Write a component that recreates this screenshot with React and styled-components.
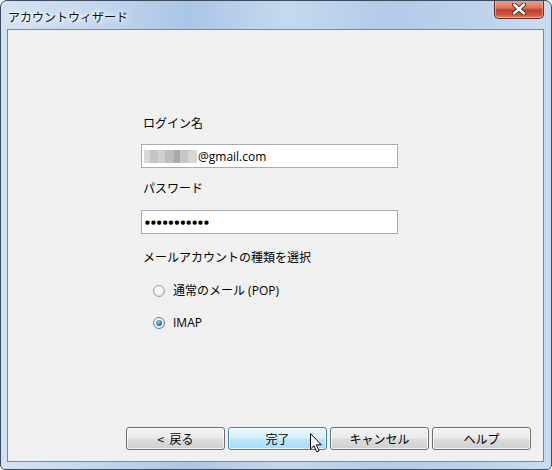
import React from "react";
import styled, { createGlobalStyle } from "styled-components";

const GlobalStyle = createGlobalStyle`
  html, body {
    margin: 0;
    padding: 0;
    background: #ffffff;
  }
  body {
    font-family: "Open Sans", "Noto Sans CJK JP", sans-serif;
    font-size: 12px;
    color: #000;
  }
`;

const Window = styled.div`
  position: relative;
  box-sizing: border-box;
  width: 552px;
  height: 470px;
  border: 1px solid #3d4b5c;
  border-radius: 7px 7px 5px 5px;
  background: linear-gradient(
    90deg,
    #d4e3f3 0%,
    #c2d6ee 18%,
    #aac6e6 34%,
    #c4d9ef 52%,
    #b2cbe8 70%,
    #bcd2ec 86%,
    #c9dcf1 100%
  );
  display: flex;
  flex-direction: column;
  overflow: hidden;
`;

const TitleBar = styled.div`
  height: 28px;
  display: flex;
  align-items: flex-start;
  justify-content: space-between;
  padding-left: 7px;
  padding-right: 6px;
`;

const Title = styled.span`
  margin-top: 8px;
  font-family: "Noto Sans CJK JP", sans-serif;
  font-size: 12px;
  line-height: 16px;
  color: #111;
  text-shadow: 0 0 8px #ffffff, 0 0 6px #ffffff, 0 0 4px #ffffff;
`;

const CloseButton = styled.div`
  width: 50px;
  height: 19px;
  margin-top: -1px;
  margin-right: 1px;
  box-sizing: border-box;
  border: 1px solid #6b2a22;
  border-top: none;
  border-radius: 0 0 5px 5px;
  background: linear-gradient(
    180deg,
    #e9a493 0%,
    #d8735f 45%,
    #c0412b 55%,
    #cf5a3f 85%,
    #e08a6c 100%
  );
  box-shadow: inset 0 0 0 1px rgba(255, 210, 195, 0.5);
  display: flex;
  align-items: center;
  justify-content: center;
`;

const Client = styled.div`
  flex: 1;
  margin: 0 7px 7px 6px;
  box-sizing: border-box;
  border: 1px solid #7d8894;
  background: #f0f0f0;
  display: flex;
  flex-direction: column;
`;

const Form = styled.div`
  width: 257px;
  margin: 85px 0 0 133px;
  display: flex;
  flex-direction: column;
`;

const Label = styled.div`
  font-family: "Noto Sans CJK JP", sans-serif;
  font-size: 12px;
  line-height: 16px;
  margin-left: 2px;
  margin-top: ${(p) => p.$gap || 0}px;
`;

const TextBox = styled.div`
  box-sizing: border-box;
  height: 24px;
  margin-top: ${(p) => p.$gap || 0}px;
  border: 1px solid #a9abaf;
  background: #ffffff;
  display: flex;
  align-items: center;
  padding-left: 2px;
  font-size: 12px;
`;

const Smudge = styled.div`
  display: flex;
  height: 13px;
  margin-right: 1px;
  filter: blur(0.6px);
`;

const SmudgeCell = styled.div`
  width: ${(p) => p.$w}px;
  background: ${(p) => p.$c};
`;

const Dots = styled.span`
  font-family: "DejaVu Sans", sans-serif;
  font-size: 5.5px;
  letter-spacing: 1.1px;
  margin-left: 1px;
  color: #000;
`;

const RadioRow = styled.label`
  display: flex;
  align-items: center;
  gap: 8px;
  margin-left: 12px;
  margin-top: ${(p) => p.$gap || 0}px;
  font-size: 12px;
  line-height: 16px;
`;

const RadioDot = styled.span`
  box-sizing: border-box;
  width: 12px;
  height: 12px;
  border-radius: 50%;
  border: 1px solid ${(p) => (p.$on ? "#5a7ea3" : "#9aa0a6")};
  background: radial-gradient(circle at 40% 35%, #ffffff 0%, #f4f4f4 45%, #d8d8d8 100%);
  display: flex;
  align-items: center;
  justify-content: center;

  &::after {
    content: "";
    display: ${(p) => (p.$on ? "block" : "none")};
    width: 6px;
    height: 6px;
    border-radius: 50%;
    background: radial-gradient(circle at 40% 35%, #9ad0f5 0%, #2e7ac2 55%, #164b86 100%);
  }
`;

const ButtonBar = styled.div`
  margin-top: auto;
  margin-left: 118px;
  margin-bottom: 11px;
  display: flex;
  gap: 3px;
`;

const Button = styled.div`
  box-sizing: border-box;
  width: 99px;
  height: 23px;
  border-radius: 3px;
  border: 1px solid ${(p) => (p.$hot ? "#3c7fb1" : "#707070")};
  background: ${(p) =>
    p.$hot
      ? "linear-gradient(180deg, #eaf6fd 0%, #d9f0fc 48%, #bee6fd 52%, #a7d9f5 100%)"
      : "linear-gradient(180deg, #f2f2f2 0%, #ebebeb 48%, #dddddd 52%, #cfcfcf 100%)"};
  box-shadow: inset 0 0 0 1px rgba(255, 255, 255, 0.7);
  display: flex;
  align-items: center;
  justify-content: center;
  font-family: "Noto Sans CJK JP", sans-serif;
  font-size: 12px;
  line-height: 16px;
  white-space: pre;
`;

const Pointer = styled.svg`
  position: absolute;
  left: 309px;
  top: 432px;
`;

const smudge = [
  [6, "#d8d8d8"],
  [8, "#c4c4c4"],
  [7, "#d0d0d0"],
  [9, "#bdbdbd"],
  [6, "#a9a9a9"],
  [8, "#c6c6c6"],
  [9, "#d6d6d6"],
];

const App = () => (
  <>
    <GlobalStyle />
    <Window>
      <TitleBar>
        <Title>アカウントウィザード</Title>
        <CloseButton>
          <svg width="14" height="12" viewBox="0 0 14 12">
            <path
              d="M2 1.5 L12 10.5 M12 1.5 L2 10.5"
              stroke="#4a1d16"
              strokeWidth="4.2"
              strokeLinecap="round"
            />
            <path
              d="M2 1.5 L12 10.5 M12 1.5 L2 10.5"
              stroke="#ffffff"
              strokeWidth="2.4"
              strokeLinecap="round"
            />
          </svg>
        </CloseButton>
      </TitleBar>
      <Client>
        <Form>
          <Label>ログイン名</Label>
          <TextBox $gap={13}>
            <Smudge>
              {smudge.map(([w, c], i) => (
                <SmudgeCell key={i} $w={w} $c={c} />
              ))}
            </Smudge>
            <span>@gmail.com</span>
          </TextBox>
          <Label $gap={12}>パスワード</Label>
          <TextBox $gap={14}>
            <Dots>●●●●●●●●●●●</Dots>
          </TextBox>
          <Label $gap={15}>メールアカウントの種類を選択</Label>
          <RadioRow $gap={18}>
            <RadioDot />
            <span>通常のメール (POP)</span>
          </RadioRow>
          <RadioRow $gap={16}>
            <RadioDot $on />
            <span>IMAP</span>
          </RadioRow>
        </Form>
        <ButtonBar>
          <Button>{"<  戻る"}</Button>
          <Button $hot>完了</Button>
          <Button>キャンセル</Button>
          <Button>ヘルプ</Button>
        </ButtonBar>
      </Client>
      <Pointer width="13" height="20" viewBox="0 0 13 20">
        <path
          d="M0.5 0.5 L0.5 16 L4 12.6 L6.7 18.8 L9 17.8 L6.4 11.8 L11.2 11.8 Z"
          fill="#ffffff"
          stroke="#000000"
          strokeWidth="1"
          strokeLinejoin="round"
        />
      </Pointer>
    </Window>
  </>
);

export default App;
